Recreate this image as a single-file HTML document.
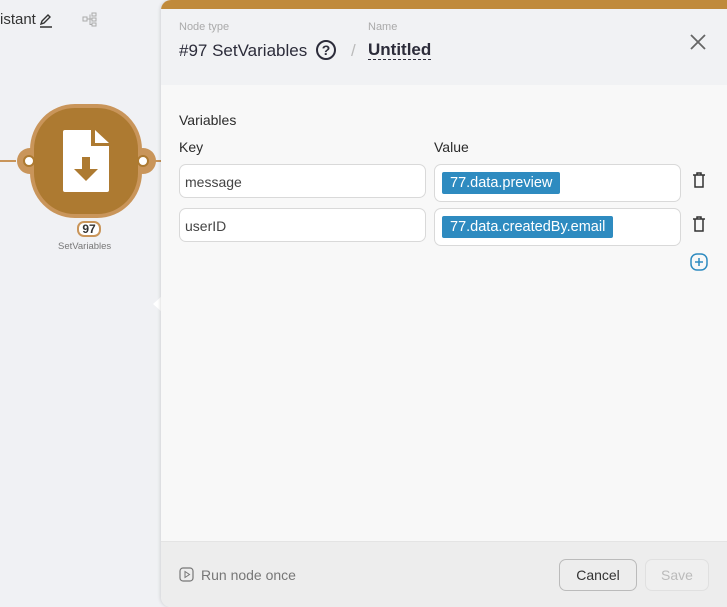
<!DOCTYPE html>
<html><head><meta charset="utf-8"><style>
*{box-sizing:border-box;margin:0;padding:0}
body{width:727px;height:607px;overflow:hidden;background:#f0f1f4;font-family:"Liberation Sans",sans-serif;position:relative}
.abs{position:absolute}
.panel{left:161px;top:0;width:570px;height:607px;border-radius:10px 0 0 10px;overflow:hidden;background:#f8f8f8;box-shadow:-1px 0 3px rgba(0,0,0,.12)}
.topbar{left:0;top:0;width:100%;height:9px;background:#c08a3b}
.header{left:0;top:9px;width:100%;height:76px;background:#f1f2f4}
.footer{left:0;top:541px;width:100%;height:66px;background:#ededed;border-top:1px solid #e4e4e4}
.inp{background:#fff;border:1px solid #d9d9d9;border-radius:7px}
.tag{background:#2e8bc0;color:#fff;font-size:14.5px;padding:3px 8px;border-radius:2px}
.lbl{font-size:14px;color:#2b2b2b}
</style></head><body>
<div class="abs" style="left:0;top:11px;font-size:15px;color:#333">istant</div>
<svg class="abs" style="left:38px;top:12px" width="16" height="16" viewBox="0 0 16 16"><path d="M3 12l1-3 6-6 2 2-6 6z M2 15h12" stroke="#333" stroke-width="1.4" fill="none"/></svg>
<svg class="abs" style="left:82px;top:11px" width="16" height="16" viewBox="0 0 16 16" fill="none" stroke="#aaa" stroke-width="1"><rect x="1" y="6" width="4" height="4"/><rect x="10" y="2" width="4" height="3"/><rect x="10" y="7" width="4" height="3"/><rect x="10" y="12" width="4" height="3"/><path d="M5 8h5M8 3.5v10h2"/></svg>
<div class="abs" style="left:0;top:160px;width:16px;height:2px;background:#c9955a"></div>
<div class="abs" style="left:141px;top:160px;width:20px;height:2px;background:#c9955a"></div>
<div class="abs" style="left:17px;top:148px;width:26px;height:26px;border-radius:50%;background:#c9955a"></div>
<div class="abs" style="left:130px;top:148px;width:26px;height:26px;border-radius:50%;background:#c9955a"></div>
<div class="abs" style="left:30px;top:104px;width:112px;height:114px;border-radius:40%;background:#c9955a"></div>
<div class="abs" style="left:34px;top:108px;width:104px;height:106px;border-radius:39%;background:#ad7a31"></div>
<div class="abs" style="left:23px;top:155px;width:12px;height:12px;border-radius:50%;background:#fff;border:2px solid #ad7a31"></div>
<div class="abs" style="left:137px;top:155px;width:12px;height:12px;border-radius:50%;background:#fff;border:2px solid #ad7a31"></div>
<svg class="abs" style="left:63px;top:130px" width="46" height="62" viewBox="0 0 46 62"><path d="M2 0h26v16h18v44a2 2 0 0 1-2 2H2a2 2 0 0 1-2-2V2a2 2 0 0 1 2-2zM32 0l14 13H32z" fill="#fff"/><path d="M19 27h8v12h8L23 51 11 39h8z" fill="#ad7a31"/></svg>
<div class="abs" style="left:77px;top:221px;width:24px;height:16px;border:2px solid #c9955a;border-radius:7px;background:#fff;font-size:12px;font-weight:bold;text-align:center;line-height:12px;color:#333">97</div>
<div class="abs" style="left:58px;top:241px;font-size:9.5px;color:#777">SetVariables</div>
<div class="abs" style="left:153px;top:296px;width:0;height:0;border-top:8px solid transparent;border-bottom:8px solid transparent;border-right:9px solid #fff"></div>

<div class="abs panel">
 <div class="abs topbar"></div>
 <div class="abs header"></div>
 <div class="abs" style="left:18px;top:21px;font-size:11px;color:#aaa">Node type</div>
 <div class="abs" style="left:207px;top:21px;font-size:11px;color:#aaa">Name</div>
 <div class="abs" style="left:18px;top:41px;font-size:17px;color:#2c2c3a">#97 SetVariables</div>
 <div class="abs" style="left:155px;top:40px;width:20px;height:20px;border:2px solid #2c2c3a;border-radius:50%;font-size:14px;font-weight:bold;text-align:center;line-height:17px;color:#2c2c3a">?</div>
 <div class="abs" style="left:190px;top:41px;font-size:17px;color:#bbb">/</div>
 <div class="abs" style="left:207px;top:40px;font-size:17px;font-weight:bold;color:#2c2c3a;border-bottom:1.5px dashed #2c2c3a;line-height:19px">Untitled</div>
 <svg class="abs" style="left:528px;top:33px" width="18" height="18" viewBox="0 0 18 18"><path d="M2 2l14 14M16 2L2 16" stroke="#666" stroke-width="1.8"/></svg>
 <div class="abs lbl" style="left:18px;top:112px">Variables</div>
 <div class="abs lbl" style="left:18px;top:139px">Key</div>
 <div class="abs lbl" style="left:273px;top:139px">Value</div>
 <div class="abs inp" style="left:18px;top:164px;width:247px;height:34px"></div>
 <div class="abs lbl" style="left:24px;top:174px;color:#444">message</div>
 <div class="abs inp" style="left:18px;top:208px;width:247px;height:34px"></div>
 <div class="abs lbl" style="left:24px;top:218px;color:#444">userID</div>
 <div class="abs inp" style="left:273px;top:164px;width:247px;height:38px"></div>
 <div class="abs tag" style="left:281px;top:172px">77.data.preview</div>
 <div class="abs inp" style="left:273px;top:208px;width:247px;height:38px"></div>
 <div class="abs tag" style="left:281px;top:216px">77.data.createdBy.email</div>
 <svg class="abs" style="left:531px;top:172px" width="14" height="16" viewBox="0 0 14 16"><path d="M1 3h12M5 3V1h4v2M3 3v12h8V3" stroke="#333" stroke-width="1.5" fill="none"/></svg>
 <svg class="abs" style="left:531px;top:216px" width="14" height="16" viewBox="0 0 14 16"><path d="M1 3h12M5 3V1h4v2M3 3v12h8V3" stroke="#333" stroke-width="1.5" fill="none"/></svg>
 <svg class="abs" style="left:529px;top:253px" width="18" height="18" viewBox="0 0 18 18"><rect x="1" y="1" width="16" height="16" rx="6" stroke="#2e8bc0" stroke-width="1.5" fill="none"/><path d="M9 5v8M5 9h8" stroke="#2e8bc0" stroke-width="1.5"/></svg>
 <div class="abs footer"></div>
 <svg class="abs" style="left:18px;top:567px" width="15" height="15" viewBox="0 0 15 15"><rect x="1" y="1" width="13" height="13" rx="3" stroke="#777" stroke-width="1.2" fill="none"/><path d="M6 4.5v6l4.5-3z" stroke="#777" fill="none"/></svg>
 <div class="abs" style="left:40px;top:567px;font-size:14px;color:#777">Run node once</div>
 <div class="abs" style="left:398px;top:559px;width:78px;height:32px;border:1px solid #bbb;border-radius:7px;font-size:14px;color:#333;text-align:center;line-height:30px">Cancel</div>
 <div class="abs" style="left:484px;top:559px;width:64px;height:32px;border:1px solid #e0e0e0;border-radius:7px;font-size:14px;color:#bbb;text-align:center;line-height:30px;background:#efefef">Save</div>
</div>
</body></html>
